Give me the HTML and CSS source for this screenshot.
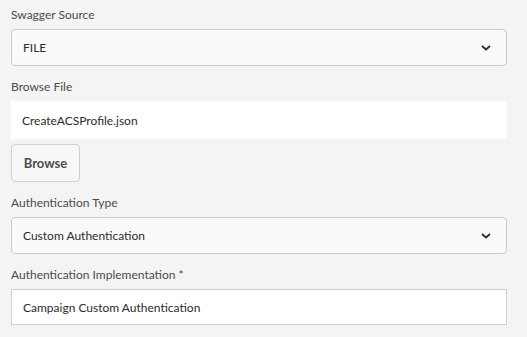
FILE: index.html
```html
<!DOCTYPE html>
<html lang="en">
<head>
    <meta charset="UTF-8">
    <title>Swagger Source</title>
    <link rel="stylesheet" href="styles.css">
</head>
<body>
    <div class="form">
        <label class="label">Swagger Source</label>
        <div class="select">
            <span>FILE</span>
            <svg class="chevron" width="10" height="6" viewBox="0 0 10 6"><path d="M1 1 L5 4.5 L9 1" fill="none" stroke="#2c2c2c" stroke-width="1.8"/></svg>
        </div>

        <label class="label">Browse File</label>
        <div class="input plain">CreateACSProfile.json</div>
        <button class="browse-btn">Browse</button>

        <label class="label">Authentication Type</label>
        <div class="select">
            <span>Custom Authentication</span>
            <svg class="chevron" width="10" height="6" viewBox="0 0 10 6"><path d="M1 1 L5 4.5 L9 1" fill="none" stroke="#2c2c2c" stroke-width="1.8"/></svg>
        </div>

        <label class="label">Authentication Implementation *</label>
        <div class="input bordered">Campaign Custom Authentication</div>
    </div>
</body>
</html>
```

FILE: styles.css
```css
body {
    margin: 0;
    background: #f4f4f4;
    font-family: Lato, "Open Sans", Arial, sans-serif;
    font-size: 12px;
    color: #2c2c2c;
}

.form {
    box-sizing: border-box;
    width: 507px;
    padding: 7px 0 0 11px;
    display: flex;
    flex-direction: column;
    align-items: stretch;
}

.label {
    color: #4b4b4b;
    font-size: 12px;
    line-height: 16px;
    margin-bottom: 6px;
}

.select {
    box-sizing: border-box;
    height: 37px;
    background: #fafafa;
    border: 1px solid #cacaca;
    border-radius: 4px;
    display: flex;
    align-items: center;
    justify-content: space-between;
    padding: 0 15px 0 11px;
    margin-bottom: 13px;
}

.input {
    box-sizing: border-box;
    height: 36px;
    background: #fff;
    display: flex;
    align-items: center;
    padding: 0 11px;
}

.input.plain {
    height: 38px;
}

.input.bordered {
    border: 1px solid #d0d0d0;
}

.browse-btn {
    align-self: flex-start;
    margin-top: 5px;
    margin-bottom: 13px;
    height: 38px;
    width: 69px;
    background: #f7f7f7;
    border: 1px solid #cfcfcf;
    border-radius: 4px;
    font-family: inherit;
    font-size: 13px;
    font-weight: bold;
    color: #4b4b4b;
}
```
